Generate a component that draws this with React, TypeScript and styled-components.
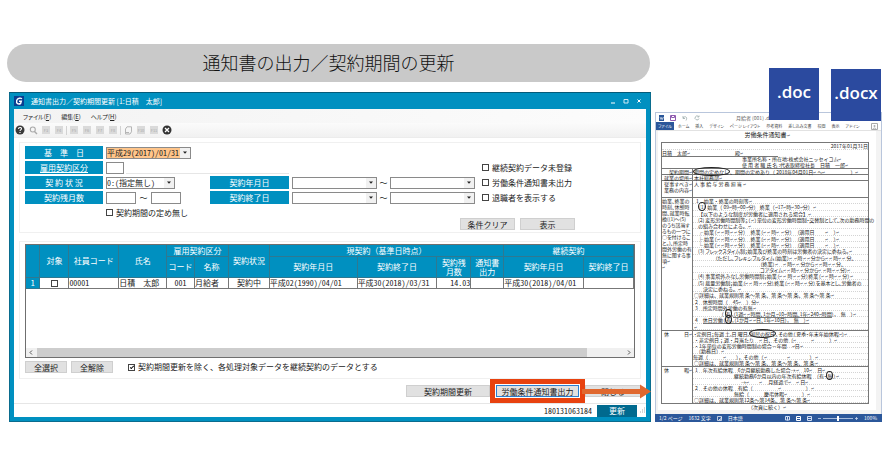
import React from 'react';
import styled, { createGlobalStyle, css } from 'styled-components';

const BLUE = '#0090c0';
const WORD = '#2b579a';

const Global = createGlobalStyle`
  *, *::before, *::after { box-sizing: border-box; }
  body { margin: 0; background: #fff; }
  body, button, input, select { font-family: "Noto Sans CJK JP", "Noto Sans", sans-serif; font-size: 8px; line-height: 10px; color: #222; }
`;

/* ---------- page ---------- */
const Page = styled.main`
  padding: 44px 8px 48px 9px;
`;
const Columns = styled.div`
  display: grid;
  grid-template-columns: minmax(0, 642fr) minmax(0, 227fr);
  column-gap: 4px;
  align-items: end;
`;
const Heading = styled.h1`
  margin: 0 1px 10px -2px;
  height: 38px;
  line-height: 36px;
  border-radius: 19px;
  background: #c9c9c9;
  text-align: center;
  font-size: 18px;
  font-weight: 300;
  color: #111;
`;
const Left = styled.div`
  display: flex;
  flex-direction: column;
`;

/* ---------- application window ---------- */
const AppWindow = styled.section`
  display: flex;
  flex-direction: column;
  background: ${BLUE};
  border: 1px solid #0a6c8e;
  border-top-color: #055a78;
  padding: 0 4px 4px;
`;
const TitleBar = styled.header`
  display: flex;
  align-items: center;
  gap: 7px;
  height: 16px;
  color: #fff;
`;
const TitleText = styled.span`
  flex: 1;
  font-size: 7px;
  font-feature-settings: "palt";
`;
const WindowButtons = styled.div`
  display: flex;
  gap: 3px;
  padding-right: 2px;
`;
const WindowButton = styled.button`
  width: 10px;
  height: 10px;
  padding: 0;
  border: 0;
  background: none;
  display: grid;
  place-items: center;
`;
const MenuBar = styled.nav`
  display: flex;
  gap: 6px;
  height: 14px;
  padding: 0 7px;
  background: linear-gradient(90deg, #f3f3f3, #fcfcfc);
`;
const MenuItem = styled.button`
  padding: 0 2px;
  border: 0;
  background: none;
  font-size: 6px;
  line-height: 13px;
  font-feature-settings: "palt";
`;
const ToolBar = styled.div`
  display: flex;
  align-items: center;
  gap: 3px;
  height: 15px;
  padding: 0 1px;
  background: linear-gradient(#fbfbfb, #f1f1f1);
  border-bottom: 1px solid #ececec;
`;
const ToolButton = styled.button`
  width: 10px;
  height: 10px;
  padding: 0;
  border: 0;
  background: none;
  display: grid;
  place-items: center;
`;
const KeyTile = styled.span`
  width: 8px;
  height: 8px;
  background: #dadada;
  color: #aaa;
  font-size: 4px;
  line-height: 8px;
  text-align: center;
`;
const ToolSeparator = styled.i`
  width: 1px;
  height: 9px;
  margin: 0 -1px;
  background: #d2d2d2;
`;
const Body = styled.div`
  display: flex;
  flex-direction: column;
  background: #fff;
  padding: 4px 5px 0;
`;
const Group = styled.div`
  border: 1px solid #f0f0f0;
  padding: 2px 5px;
`;

/* ---------- search form ---------- */
const Form = styled.form`
  display: grid;
  grid-template-columns: 78px 88px 10px 79px minmax(0, 1fr) 153px;
  grid-auto-rows: 13px;
  gap: 2px 3px;
  align-items: center;
  min-height: 90px;
  padding: 1px 0 2px;
`;
const Cell = styled.div<{ $at: string }>`
  grid-area: ${(p) => p.$at};
  min-width: 0;
`;
const FieldLabel = styled.label<{ $at: string; $link?: boolean }>`
  grid-area: ${(p) => p.$at};
  align-self: stretch;
  display: flex;
  justify-content: center;
  background: ${BLUE};
  color: #fff;
  line-height: 13px;
  white-space: pre;
  text-decoration: ${(p) => (p.$link ? 'underline' : 'none')};
`;
const Range = styled.div<{ $gap: number }>`
  display: flex;
  align-items: center;
  gap: ${(p) => p.$gap}px;
`;
const Tilde = styled.span`
  width: 9px;
  text-align: center;
`;
const TextBox = styled.input<{ $w: number }>`
  display: block;
  width: ${(p) => p.$w}px;
  height: 12px;
  padding: 0 1px;
  border: 1px solid #8a8a8a;
  background: #fff;
`;
const SelectFrame = styled.span<{ $w?: number; $warm?: boolean }>`
  display: flex;
  ${(p) => (p.$w ? css`width: ${p.$w}px;` : css`flex: 0 1 85px; min-width: 0;`)}
  height: 12px;
  border: 1px solid #8a8a8a;
  background: #fff;
  select {
    flex: 1;
    min-width: 0;
    padding: 0;
    border: 0;
    appearance: none;
    font-feature-settings: "hwid";
    background: ${(p) => (p.$warm ? '#ffc58a' : '#fff')};
  }
`;
const Drop = styled.span`
  width: 10px;
  display: grid;
  place-items: center;
  background: #f1f1f1;
`;
const NameOutput = styled.output`
  grid-area: 2 / 2 / 3 / 5;
  margin-left: 20px;
  height: 12px;
  border-bottom: 1px solid #e6e6e6;
`;
const CheckLabel = styled.label`
  display: flex;
  align-items: center;
  gap: 3px;
  white-space: nowrap;
`;
const Check = styled.input`
  appearance: none;
  width: 7px;
  height: 7px;
  margin: 0;
  border: 1px solid #444;
  background: #fff;
  display: grid;
  place-items: center;
  &:checked::after {
    content: "";
    width: 4px;
    height: 2px;
    border: solid #111;
    border-width: 0 0 1px 1px;
    transform: rotate(-45deg);
  }
`;
const FormActions = styled.div`
  display: flex;
  justify-content: flex-end;
  gap: 5px;
  padding-right: 60px;
  margin-top: -17px;
`;
const Button = styled.button<{ $w: number; $focus?: boolean }>`
  width: ${(p) => p.$w}px;
  height: 12px;
  padding: 0;
  line-height: 9px;
  border: 1px solid ${(p) => (p.$focus ? '#2a7fd0' : '#cfcfcf')};
  background: #e1e1e1;
  white-space: nowrap;
`;

/* ---------- data grid ---------- */
const GridGroup = styled(Group)`
  margin-top: 8px;
  padding: 2px 5px 5px;
`;
const GridBox = styled.div`
  display: flex;
  flex-direction: column;
  min-height: 114px;
  border: 1px solid #6f6f6f;
`;
const Table = styled.table`
  width: 100%;
  table-layout: fixed;
  border-collapse: collapse;
  flex: none;
`;
const Th = styled.th`
  padding: 0;
  border: 1px solid #2f7890;
  border-top: 0;
  background: ${BLUE};
  color: #fff;
  font-weight: 400;
  line-height: 9px;
  white-space: pre;
  &:first-child { border-left: 0; }
`;
const Td = styled.td<{ $align?: string }>`
  padding: 0;
  height: 11px;
  border: 1px solid #777;
  line-height: 10px;
  white-space: nowrap;
  text-align: ${(p) => p.$align ?? 'left'};
  ${Check} { display: inline-grid; vertical-align: middle; }
`;
const RowHead = styled(Th)`
  height: 11px;
`;
const Num = styled.span`
  font-feature-settings: "hwid";
`;
const HeadRow = styled.tr<{ $h: number }>`
  height: ${(p) => p.$h}px;
`;
const Scroll = styled.div`
  display: flex;
  align-items: center;
  gap: 4px;
  height: 9px;
  margin-top: auto;
  padding: 0 3px;
  background: #f0f0f0;
`;
const Thumb = styled.i`
  flex: 0 1 550px;
  height: 9px;
  margin-right: auto;
  background: #cdcdcd;
`;
const Below = styled.div`
  display: flex;
  align-items: center;
  gap: 4px;
  margin-top: 3px;
  ${CheckLabel} { margin-left: 11px; }
`;
const Footer = styled.div`
  display: flex;
  justify-content: flex-end;
  align-items: center;
  height: 24px;
  gap: 6px;
`;
const Highlight = styled.div`
  position: relative;
  display: flex;
  &::before {
    content: "";
    position: absolute;
    inset: -6px;
    border: 5px solid #e8420f;
    z-index: 1;
    pointer-events: none;
  }
`;
const ArrowHost = styled.div`
  position: relative;
  display: flex;
`;
const Arrow = styled.svg`
  position: absolute;
  left: -3px;
  top: -1px;
  z-index: 2;
`;
const StatusBar = styled.footer`
  display: flex;
  justify-content: flex-end;
  align-items: center;
  gap: 2px;
  height: 14px;
  background: #fff;
  border-top: 1px solid #e6e6e6;
`;
const Serial = styled(Num)`
  padding-right: 3px;
`;
const UpdateButton = styled.button`
  width: 40px;
  height: 12px;
  padding: 0;
  border: 0;
  line-height: 12px;
  background: #006a8f;
  color: #fff;
`;

/* ---------- word processor window ---------- */
const DocWindow = styled.section`
  position: relative;
  display: flex;
  flex-direction: column;
  border: 1px solid #b9c6dc;
  border-width: 1px 1px 0;
  background: #fff;
`;
const Badges = styled.div`
  position: absolute;
  top: -45px;
  right: 0;
  display: flex;
  gap: 12px;
`;
const Badge = styled.div<{ $drop?: boolean }>`
  width: 50px;
  height: 52px;
  margin-top: ${(p) => (p.$drop ? 1 : 0)}px;
  background: #2b4a9f;
  color: #fff;
  text-align: center;
  font: 600 17px/48px "Open Sans", "Noto Sans", sans-serif;
`;
const QuickBar = styled.div`
  display: flex;
  align-items: center;
  gap: 6px;
  height: 9px;
  padding: 0 3px;
  font-size: 5px;
  line-height: 9px;
  color: #666;
`;
const DocName = styled.span`
  margin-left: 30px;
`;
const Tabs = styled.nav`
  display: flex;
  align-items: center;
  gap: 2px;
  height: 9px;
  padding-right: 3px;
  border-bottom: 1px solid #e2e2e2;
`;
const Tab = styled.button<{ $on?: boolean }>`
  padding: 0 2px;
  border: 0;
  font-size: 4px;
  line-height: 8px;
  white-space: nowrap;
  font-feature-settings: "palt";
  background: ${(p) => (p.$on ? WORD : 'transparent')};
  color: ${(p) => (p.$on ? '#fff' : '#444')};
`;
const Canvas = styled.div`
  background: #f3f3f3;
  padding: 0 5px 4px 2px;
`;
const Sheet = styled.article`
  background: #fff;
  padding: 0 3px 0 3px;
  font-size: 5px;
  line-height: 6px;
  color: #222;
  white-space: pre;
`;
const SheetTitle = styled.h2`
  margin: 0;
  height: 11px;
  font-size: 6px;
  line-height: 8px;
  font-weight: 400;
  text-align: center;
`;
const DocTable = styled.div`
  margin-right: 4px;
  border: 1px solid #777;
`;
const DocRow = styled.div<{ $h: number }>`
  display: grid;
  grid-template-columns: 30px minmax(0, 1fr);
  min-height: ${(p) => p.$h}px;
  border-top: 1px solid #777;
`;
const Lines = styled.div`
  display: flex;
  flex-direction: column;
  min-width: 0;
  & + & { border-left: 1px solid #777; }
`;
const Line = styled.div<{ $in?: number; $end?: boolean; $rule?: boolean; $fixed?: boolean; $tight?: boolean }>`
  flex: ${(p) => (p.$fixed ? '0 0 6px' : '1 1 0')};
  min-height: 0;
  line-height: 6px;
  padding-left: ${(p) => p.$in ?? 0}px;
  text-align: ${(p) => (p.$end ? 'right' : 'left')};
  border-bottom: ${(p) => (p.$rule ? '1px dotted #d4d4d4' : '0')};
  font-feature-settings: ${(p) => (p.$tight ? '"palt"' : 'normal')};
`;
const HeaderLines = styled.div`
  display: flex;
  flex-direction: column;
  height: 25px;
`;
const Ringed = styled.span`
  border: 1px solid #222;
  border-radius: 50%;
`;
const Underlined = styled.span`
  border-bottom: 1px solid #777;
`;
const ReturnMark = styled.small`
  font-size: 4px;
  color: #556;
`;
const Closing = styled.p`
  margin: 0;
  text-align: center;
  line-height: 6px;
`;
const DocStatus = styled.footer`
  display: flex;
  align-items: center;
  gap: 6px;
  height: 8px;
  margin: 0 -1px;
  padding: 0 5px 0 4px;
  background: ${WORD};
  color: #fff;
  font-size: 5px;
  line-height: 8px;
  white-space: nowrap;
`;
const Spacer = styled.span`
  flex: 1;
`;

/* Text in which every "↵" is drawn as a small paragraph mark. */
const Tx = ({ children }: { children: string }) => (
  <>
    {children.split('↵').map((part, i) => (
      <React.Fragment key={i}>
        {i > 0 && <ReturnMark>↵</ReturnMark>}
        {part}
      </React.Fragment>
    ))}
  </>
);

const Combo = ({ id, value, w, warm, label }: { id: string; value?: string; w?: number; warm?: boolean; label?: string }) => (
  <SelectFrame $w={w} $warm={warm}>
    <select id={id} aria-label={label} defaultValue={value ?? ''}>
      <option>{value ?? ''}</option>
    </select>
    <Drop>
      <svg width="4" height="3" viewBox="0 0 4 3"><path d="M0 .5h4L2 2.8z" fill="#222" /></svg>
    </Drop>
  </SelectFrame>
);

const Key = ({ name }: { name: string }) => (
  <ToolButton aria-label={name}><KeyTile>{name}</KeyTile></ToolButton>
);

const Option = ({ at, text }: { at: string; text: string }) => (
  <Cell $at={at}><CheckLabel><Check type="checkbox" />{text}</CheckLabel></Cell>
);

/* indent, text, and whether punctuation is set proportionally */
type Row = [number, React.ReactNode, boolean?];
const Block = ({ rows }: { rows: Row[] }) => (
  <Lines>
    {rows.map(([indent, text, tight], i) => (
      <Line key={i} $in={indent} $tight={tight} $rule>{typeof text === 'string' ? <Tx>{text}</Tx> : text}</Line>
    ))}
  </Lines>
);

const timeRows: Row[] = [
  [3, '1　始業・終業の時刻等↵'],
  [5, <><Ringed>(1)</Ringed><Tx> 始業（ 09↵時↵00↵分） 終業（↵17↵時↵30↵分）↵</Tx></>],
  [5, '【以下のような制度が労働者に適用される場合】↵'],
  [5, '(2) 変形労働時間制等；（ ↵）単位の変形労働時間制・交替制として、次の勤務時間の', true],
  [5, 'の組み合わせによる。↵'],
  [5, '┌ 始業（↵ ↵ 時↵ ↵ 分）　終業（↵ ↵ 時↵ ↵ 分）　（適用日　　↵　 ）↵', true],
  [5, '├ 始業（↵ ↵ 時↵ ↵ 分）　終業（↵ ↵ 時↵ ↵ 分）　（適用日　　↵　 ）↵', true],
  [5, '└ 始業（↵ ↵ 時↵ ↵ 分）　終業（↵ ↵ 時↵ ↵ 分）　（適用日　　↵　 ）↵', true],
  [5, '(3) フレックスタイム制；始業及び終業の時刻は労働者の決定に委ねる。↵', true],
  [22, '（ただし、フレキシブルタイム（始業）↵ ↵ 時↵ ↵ 分から↵ ↵ 時↵ ↵ 分、', true],
  [67, '（終業）↵　↵ 時↵ ↵ 分から↵ ↵ 時↵ ↵ 分、', true],
  [67, 'コアタイム↵ ↵ 時↵ ↵ 分から↵ ↵ 時↵ ↵ 分）↵', true],
  [5, '(4) 事業場外みなし労働時間制；始業（↵ ↵ 時↵ ↵ 分）終業（↵ ↵ 時↵ ↵ 分）↵', true],
  [5, '(5) 裁量労働制；始業（↵ ↵ 時↵ ↵ 分）終業（↵ ↵ 時↵ ↵ 分）を基本とし、労働者の', true],
  [10, '決定に委ねる。↵'],
  [1, '○詳細は、就業規則第 条～第 条、第 条～第 条、第 条～第 条↵'],
  [2, '2　休憩時間（　45↵　）分↵'],
  [2, '3　所定時間外労働の有無↵'],
  [28, <>（ <Ringed>有</Ringed>,<Underlined><Tx>（1週↵ ↵時間、1か月↵10↵時間、1年↵240↵時間</Tx></Underlined><Tx>）,　無　）↵</Tx></>, true],
  [2, <>4　<Underlined>休日労働（<Ringed>有</Ringed><Tx>,（1か月↵ ↵日、1年↵10日）,　無　）↵</Tx></Underlined></>, true],
  [1, '↵'],
];
const holidayRows: Row[] = [
  [1, <>・定例日；毎週 土,日 曜日,<Ringed>国民の祝日</Ringed><Tx>, その他（ 夏季・年末年始休暇↵）↵</Tx></>, true],
  [1, '・非定例日；週・月当たり　↵ 日、その他（↵　　　↵　　　）↵'],
  [1, '・1年単位の変形労働時間制の場合－年間　↵日↵'],
  [3, '（勤務日）↵'],
  [0, '毎週（　　　↵　　），その他（↵　　　　↵　　　　）↵'],
  [1, '○詳細は、就業規則第 条～第 条、第 条～第 条、第 条↵'],
];
const leaveRows: Row[] = [
  [2, '1　年次有給休暇　6か月継続勤務した場合→↵　10↵　日↵'],
  [41, <>継続勤務6か月以内の年次有給休暇　（有・<Ringed>無</Ringed><Tx>）↵</Tx></>, true],
  [48, '→↵　　↵　 月経過で↵　↵ 日↵'],
  [2, '2　その他の休暇　有給（　　　　　↵　　　　　）↵'],
  [41, '無給（　　　慶弔休暇↵　　　）↵'],
  [1, '○詳細は、就業規則第12条～第14条、第 条～第 条↵'],
];
const timeLabel = ['始業、終業の', '時刻、休憩時', '間、就業時転', '換((1)～(5)', 'のうち該当す', 'るもの一つに', '○を付けるこ', 'と。)、所定時', '間外労働の有', '無に関する事', '項↵', '↵'];

const tabNames = ['ホーム', '挿入', 'デザイン', 'ページ レイアウト', '参考資料', '差し込み文書', '校閲', '表示', 'アドイン'];
const colWidths = [14, 29, 50, 48, 28, 34, 41, 88, 80, 34, 33, 80, 50];

function ContractWindow() {
  return (
    <AppWindow>
      <TitleBar>
        <svg width="10" height="10" viewBox="0 0 10 10">
          <rect width="10" height="10" fill="#0b3f92" />
          <path d="M7.8 3C7 1.700 3.400 1.800 2.700 4.500 1.900 7.800 4.600 8.500 6.600 7.500L7.300 5.200H5" fill="none" stroke="#fff" strokeWidth="1.400" />
        </svg>
        <TitleText>通知書出力／契約期間更新 [1:日積　太郎]</TitleText>
        <WindowButtons>
          <WindowButton aria-label="最小化"><svg width="6" height="6"><path d="M1 5h4" stroke="#fff" strokeWidth="1" /></svg></WindowButton>
          <WindowButton aria-label="最大化"><svg width="6" height="6"><path d="M1 1.500h4v3.500h-4z" fill="none" stroke="#cfeaf5" /></svg></WindowButton>
          <WindowButton aria-label="閉じる"><svg width="6" height="6"><path d="M1.500 1.500l3 3m0-3l-3 3" stroke="#fff" /></svg></WindowButton>
        </WindowButtons>
      </TitleBar>
      <MenuBar>
        <MenuItem>ファイル(<u>F</u>)</MenuItem>
        <MenuItem>編集(<u>E</u>)</MenuItem>
        <MenuItem>ヘルプ(<u>H</u>)</MenuItem>
      </MenuBar>
      <ToolBar>
        <ToolButton aria-label="ヘルプ">
          <svg width="10" height="10" viewBox="0 0 10 10"><circle cx="5" cy="5" r="4.500" fill="#3a3a3a" /><path d="M3.500 4c0-2 3-2 3-.2 0 1.200-1.500 1-1.500 2.200M5 7v1" fill="none" stroke="#fff" strokeWidth="1.100" /></svg>
        </ToolButton>
        <ToolButton aria-label="検索">
          <svg width="9" height="9" viewBox="0 0 9 9"><circle cx="3.800" cy="3.500" r="2.500" fill="none" stroke="#aaa" strokeWidth="1.100" /><path d="M5.500 5.500L8 8" stroke="#aaa" strokeWidth="1.400" /></svg>
        </ToolButton>
        <Key name="F3" /><Key name="F4" />
        <ToolSeparator />
        <Key name="F5" /><Key name="F6" /><Key name="F7" /><Key name="F8" />
        <ToolSeparator />
        <ToolButton aria-label="帳票">
          <svg width="9" height="9" viewBox="0 0 9 9"><path d="M3 .8h4.500v5L6 8H1.500V3zM1 6.500h4" fill="none" stroke="#b5b5b5" strokeWidth="1" /></svg>
        </ToolButton>
        <Key name="F10" /><Key name="F11" />
        <ToolButton aria-label="終了">
          <svg width="10" height="10" viewBox="0 0 10 10"><circle cx="5" cy="5" r="4.500" fill="#333" /><path d="M3 3l4 4m0-4L3 7" stroke="#fff" strokeWidth="1.300" /></svg>
        </ToolButton>
      </ToolBar>
      <Body>
        <Group>
          <Form id="search" onSubmit={(e) => e.preventDefault()}>
            <FieldLabel $at="1 / 1" htmlFor="base">基　準　日</FieldLabel>
            <Cell $at="1 / 2"><Combo id="base" value="平成29(2017)/01/31" w={85} warm /></Cell>
            <FieldLabel $at="2 / 1" htmlFor="kind" $link>雇用契約区分</FieldLabel>
            <NameOutput htmlFor="kind" />
            <Cell $at="2 / 2"><TextBox id="kind" $w={18} /></Cell>
            <FieldLabel $at="3 / 1" htmlFor="state">契 約 状 況</FieldLabel>
            <Cell $at="3 / 2"><Combo id="state" value="0:(指定無し)" w={69} /></Cell>
            <FieldLabel $at="3 / 4" htmlFor="startFrom">契約年月日</FieldLabel>
            <Cell $at="3 / 5">
              <Range $gap={2}><Combo id="startFrom" /><Tilde>～</Tilde><Combo id="startTo" label="契約年月日 終了" /></Range>
            </Cell>
            <FieldLabel $at="4 / 1" htmlFor="monthFrom">契約残月数</FieldLabel>
            <Cell $at="4 / 2">
              <Range $gap={3}><TextBox id="monthFrom" $w={30} /><Tilde>～</Tilde><TextBox aria-label="契約残月数 終了" $w={30} /></Range>
            </Cell>
            <FieldLabel $at="4 / 4" htmlFor="endFrom">契約終了日</FieldLabel>
            <Cell $at="4 / 5">
              <Range $gap={2}><Combo id="endFrom" /><Tilde>～</Tilde><Combo id="endTo" label="契約終了日 終了" /></Range>
            </Cell>
            <Option at="2 / 6" text="継続契約データ未登録" />
            <Option at="3 / 6" text="労働条件通知書未出力" />
            <Option at="4 / 6" text="退職者を表示する" />
            <Option at="5 / 2" text="契約期間の定め無し" />
          </Form>
          <FormActions>
            <Button type="reset" form="search" $w={55}>条件クリア</Button>
            <Button type="submit" form="search" $w={55}>表示</Button>
          </FormActions>
        </Group>
        <GridGroup>
          <GridBox>
            <Table>
              <colgroup>{colWidths.map((w, i) => <col key={i} width={`${(w / 609) * 100}%`} />)}</colgroup>
              <thead>
                <HeadRow $h={11}>
                  <Th rowSpan={2} /><Th rowSpan={2}>対象</Th><Th rowSpan={2}>社員コード</Th><Th rowSpan={2}>氏名</Th>
                  <Th colSpan={2}>雇用契約区分</Th><Th rowSpan={2}>契約状況</Th>
                  <Th colSpan={4}>現契約（基準日時点）</Th><Th colSpan={2}>継続契約</Th>
                </HeadRow>
                <HeadRow $h={21}>
                  <Th>コード</Th><Th>名称</Th><Th>契約年月日</Th><Th>契約終了日</Th>
                  <Th>{'契約残\n月数'}</Th><Th>{'通知書\n出力'}</Th><Th>契約年月日</Th><Th>契約終了日</Th>
                </HeadRow>
              </thead>
              <tbody>
                <tr>
                  <RowHead scope="row"><Num>1</Num></RowHead>
                  <Td $align="center"><Check type="checkbox" aria-label="対象" /></Td>
                  <Td><Num>00001</Num></Td><Td>日積　太郎</Td><Td $align="center"><Num>001</Num></Td><Td>月給者</Td>
                  <Td $align="center">契約中</Td><Td><Num>平成02(1990)/04/01</Num></Td><Td><Num>平成30(2018)/03/31</Num></Td>
                  <Td $align="right"><Num>14.03</Num></Td><Td /><Td><Num>平成30(2018)/04/01</Num></Td><Td />
                </tr>
              </tbody>
            </Table>
            <Scroll>
              <svg width="4" height="5"><path d="M3 .5l-2 2 2 2" fill="none" stroke="#555" /></svg>
              <Thumb />
              <svg width="4" height="5"><path d="M1 .5l2 2-2 2" fill="none" stroke="#555" /></svg>
            </Scroll>
          </GridBox>
          <Below>
            <Button $w={42}>全選択</Button>
            <Button $w={42}>全解除</Button>
            <CheckLabel><Check type="checkbox" defaultChecked />契約期間更新を除く、各処理対象データを継続契約のデータとする</CheckLabel>
          </Below>
        </GridGroup>
        <Footer>
          <Button $w={84}>契約期間更新</Button>
          <Highlight><Button $w={83} $focus>労働条件通知書出力</Button></Highlight>
          <ArrowHost>
            <Button $w={56}>閉じる</Button>
            <Arrow width="70" height="15" viewBox="0 0 70 15"><path d="M0 5h58V0.500L69 7.500 58 14.500V10H0z" fill="#e0682f" /></Arrow>
          </ArrowHost>
        </Footer>
      </Body>
      <StatusBar>
        <Serial>180131063184</Serial>
        <UpdateButton>更新</UpdateButton>
        <svg width="7" height="8"><path d="M5 1h1M3 3h1M5 3h1M1 5h1M3 5h1M5 5h1" stroke="#aaa" /></svg>
      </StatusBar>
    </AppWindow>
  );
}

function DocumentWindow() {
  return (
    <DocWindow>
      <QuickBar>
        <svg width="5" height="6"><rect width="5" height="6" fill={WORD} /><path d="M1 2l1 2.500 .7-2 .7 2L4.500 2" stroke="#fff" strokeWidth=".6" fill="none" /></svg>
        <svg width="6" height="6"><path d="M.5.5h5v5h-5zM1.500.5v2h3v-2" stroke="#8f5bb0" fill="none" /></svg>
        <svg width="6" height="6"><path d="M1 1v2.500h2M1 3c2-2.500 5-1 3 2.500" stroke="#9aa" fill="none" strokeWidth=".8" /></svg>
        <svg width="6" height="6"><path d="M4.500 1.500a2 2 0 1 0 .5 2M5 .5v1.500H3.500" stroke="#9aa" fill="none" strokeWidth=".8" /></svg>
        <DocName>月給者 (001) .doc</DocName>
      </QuickBar>
      <Tabs>
        <Tab $on>ファイル</Tab>
        {tabNames.map((t) => <Tab key={t}>{t}</Tab>)}
        <Spacer />
        <svg width="7" height="7"><path d="M.5.5h6v6h-6zM2 6.500c0-2 3-2 3 0" stroke="#aaa" fill="none" /><circle cx="3.500" cy="3" r="1" fill="#aaa" /></svg>
      </Tabs>
      <Canvas>
        <Sheet>
          <SheetTitle><Tx>労働条件通知書↵</Tx></SheetTitle>
          <DocTable>
            <HeaderLines>
              <Line $end $rule>2017年01月31日</Line>
              <Line><Underlined><Tx>日積　太郎↵　　　　　　　　　殿↵　　　　　　　</Tx></Underlined></Line>
              <Line $in={80}><Tx>事業所名称・所在地:株式会社ニッセイコム↵</Tx></Line>
              <Line $in={80}><Tx>使 用 者 職 氏 名 :代表取締役社長　日積　一郎↵</Tx></Line>
            </HeaderLines>
            <DocRow $h={6}>
              <Lines><Line $end><Tx>契約期間↵</Tx></Line></Lines>
              <Lines><Line><Ringed>期間の定めなし</Ringed><Tx>、期間の定めあり（ 2018年04月01日↵ ～↵　　　　　）↵</Tx></Line></Lines>
            </DocRow>
            <DocRow $h={6}>
              <Lines><Line $end><Tx>就業の場所↵</Tx></Line></Lines>
              <Lines><Line $in={1}><Tx>本社総務部↵</Tx></Line></Lines>
            </DocRow>
            <DocRow $h={17}>
              <Lines><Line $end $fixed><Tx>従事すべき↵</Tx></Line><Line $end $fixed><Tx>業務の内容↵</Tx></Line></Lines>
              <Lines><Line $in={1} $fixed><Tx>人 事 給 与 労 務 担 当 ↵</Tx></Line></Lines>
            </DocRow>
            <DocRow $h={133}>
              <Lines>{timeLabel.map((t, i) => <Line key={i} $fixed $tight><Tx>{t}</Tx></Line>)}</Lines>
              <Block rows={timeRows} />
            </DocRow>
            <DocRow $h={36}>
              <Lines><Line $end $fixed><Tx>休　　　日↵</Tx></Line></Lines>
              <Block rows={holidayRows} />
            </DocRow>
            <DocRow $h={37}>
              <Lines><Line $end $fixed><Tx>休　　　暇↵</Tx></Line></Lines>
              <Block rows={leaveRows} />
            </DocRow>
          </DocTable>
          <Closing><Tx>（次頁に続く）↵</Tx></Closing>
        </Sheet>
      </Canvas>
      <DocStatus>
        <span>1/2 ページ</span><span>1632 文字</span>
        <svg width="5" height="5"><path d="M.5.5h4v4h-4zM2 3l1 1 1.500-3" stroke="#fff" fill="none" strokeWidth=".7" /></svg>
        <span>日本語</span>
        <Spacer />
        <svg width="5" height="5"><path d="M.5.5h4v3.500h-4zM2.500.5v4" stroke="#cfdcf2" fill="none" /></svg>
        <svg width="5" height="5"><path d="M.5.5h4v4h-4zM.5 2.500h4" stroke="#fff" fill="none" /></svg>
        <svg width="5" height="5"><path d="M.5.5h4v4h-4zM.5 2.500h4" stroke="#cfdcf2" fill="none" /></svg>
        <svg width="40" height="5"><path d="M0 2.500h3M5 2.500h30M37 2.500h3M38.500 1v3" stroke="#c5d3ec" strokeWidth=".8" /><path d="M20 0v5" stroke="#fff" strokeWidth="2" /></svg>
        <span>100%</span>
      </DocStatus>
      <Badges>
        <Badge>.doc</Badge>
        <Badge $drop>.docx</Badge>
      </Badges>
    </DocWindow>
  );
}

export default function App() {
  return (
    <>
      <Global />
      <Page>
        <Columns>
          <Left>
            <Heading>通知書の出力／契約期間の更新</Heading>
            <ContractWindow />
          </Left>
          <DocumentWindow />
        </Columns>
      </Page>
    </>
  );
}
